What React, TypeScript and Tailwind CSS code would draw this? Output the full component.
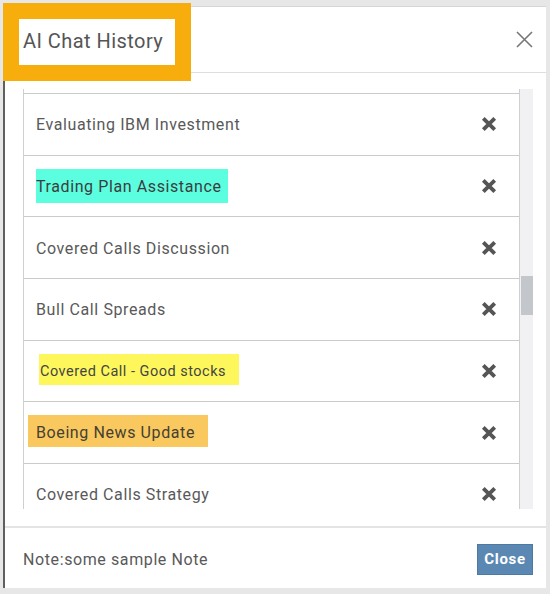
import React from 'react';

type Chat = { title: string; mark?: 'cyan' | 'yellow' | 'orange' };

const CHATS: Chat[] = [
  { title: 'Evaluating IBM Investment' },
  { title: 'Trading Plan Assistance', mark: 'cyan' },
  { title: 'Covered Calls Discussion' },
  { title: 'Bull Call Spreads' },
  { title: 'Covered Call - Good stocks', mark: 'yellow' },
  { title: 'Boeing News Update', mark: 'orange' },
  { title: 'Covered Calls Strategy' },
];

function BoldX() {
  return (
    <svg width="16" height="16" viewBox="0 0 16 16" className="shrink-0">
      <path d="M2.3 2.3 L13.7 13.7 M13.7 2.3 L2.3 13.7" stroke="#555" strokeWidth="3.8" strokeLinecap="butt" />
    </svg>
  );
}

function ThinX() {
  return (
    <svg width="17" height="17" viewBox="0 0 17 17">
      <path d="M1 1 L16 16 M16 1 L1 16" stroke="#777" strokeWidth="1.6" />
    </svg>
  );
}

function Title({ chat }: { chat: Chat }) {
  if (chat.mark === 'cyan') {
    return (
      <span className="relative mt-[2px] text-[#3d3d3d]">
        <span className="absolute left-0 top-[-6px] w-[192px] h-[34px] bg-[#5cfee0]" />
        <span className="relative">{chat.title}</span>
      </span>
    );
  }
  if (chat.mark === 'yellow') {
    return (
      <span className="relative mt-[2px] ml-[4px] text-[14.5px] tracking-[0.5px] text-[#454545]">
        <span className="absolute left-[-1px] top-[-7px] w-[200px] h-[31px] bg-[#fdf75c]" />
        <span className="relative">{chat.title}</span>
      </span>
    );
  }
  if (chat.mark === 'orange') {
    return (
      <span className="relative mt-[1px] text-[#454033]">
        <span className="absolute left-[-8px] top-[-6px] w-[180px] h-[32px] bg-[#f9c95f]" />
        <span className="relative">{chat.title}</span>
      </span>
    );
  }
  return <span className="mt-[2px]">{chat.title}</span>;
}

export default function App() {
  return (
    <div
      className="relative w-[550px] h-[594px] bg-[#e7e7e7] pt-[6px] pb-[6px] pl-[3px] pr-[4px]"
      style={{ fontFamily: 'Roboto, "Liberation Sans", sans-serif' }}
    >
      <div className="flex flex-col h-full bg-white border-l-2 border-t border-l-[#5f5f5f] border-t-[#d6d6d6]">
        <div className="h-[66px] border-b border-[#dedede] flex items-center justify-end pr-[13px] shrink-0">
          <ThinX />
        </div>

        <div className="h-[453px] shrink-0 pl-[18px] pr-[13px] pt-[16px] pb-[17px]">
          <div className="flex h-full">
            <div className="flex-1 overflow-hidden border-l border-r border-[#cfcfcf] pt-[4px]">
              {CHATS.map((c) => (
                <div
                  key={c.title}
                  className="h-[61.67px] border-t border-[#cbcbcb] flex items-center justify-between pl-[12px] pr-[22px] text-[16px] tracking-[0.6px] text-[#595959]"
                >
                  <Title chat={c} />
                  <BoldX />
                </div>
              ))}
            </div>
            <div className="w-[13px] bg-[#f1f1f3]">
              <div className="mt-[187px] ml-[1px] h-[39px] bg-[#c3c6ca]" />
            </div>
          </div>
        </div>

        <div className="flex-1 border-t-2 border-[#e4e4e4] flex items-center justify-between pl-[18px] pr-[13px]">
          <span className="mt-[4px] text-[16px] tracking-[0.6px] text-[#595959]">Note:some sample Note</span>
          <button className="w-[56px] h-[31px] mt-[3px] bg-[#5b88b2] border border-[#4d7aa4] text-white text-[15px] font-bold tracking-[0.7px]">
            Close
          </button>
        </div>
      </div>

      <div className="absolute left-[3px] top-[3px] w-[188px] h-[78px] bg-[#f7ad0b] p-[16px]">
        <div className="h-full bg-white flex items-center pl-[4px] pb-[2px] text-[20px] tracking-[0.45px] text-[#555]">
          AI Chat History
        </div>
      </div>
    </div>
  );
}
